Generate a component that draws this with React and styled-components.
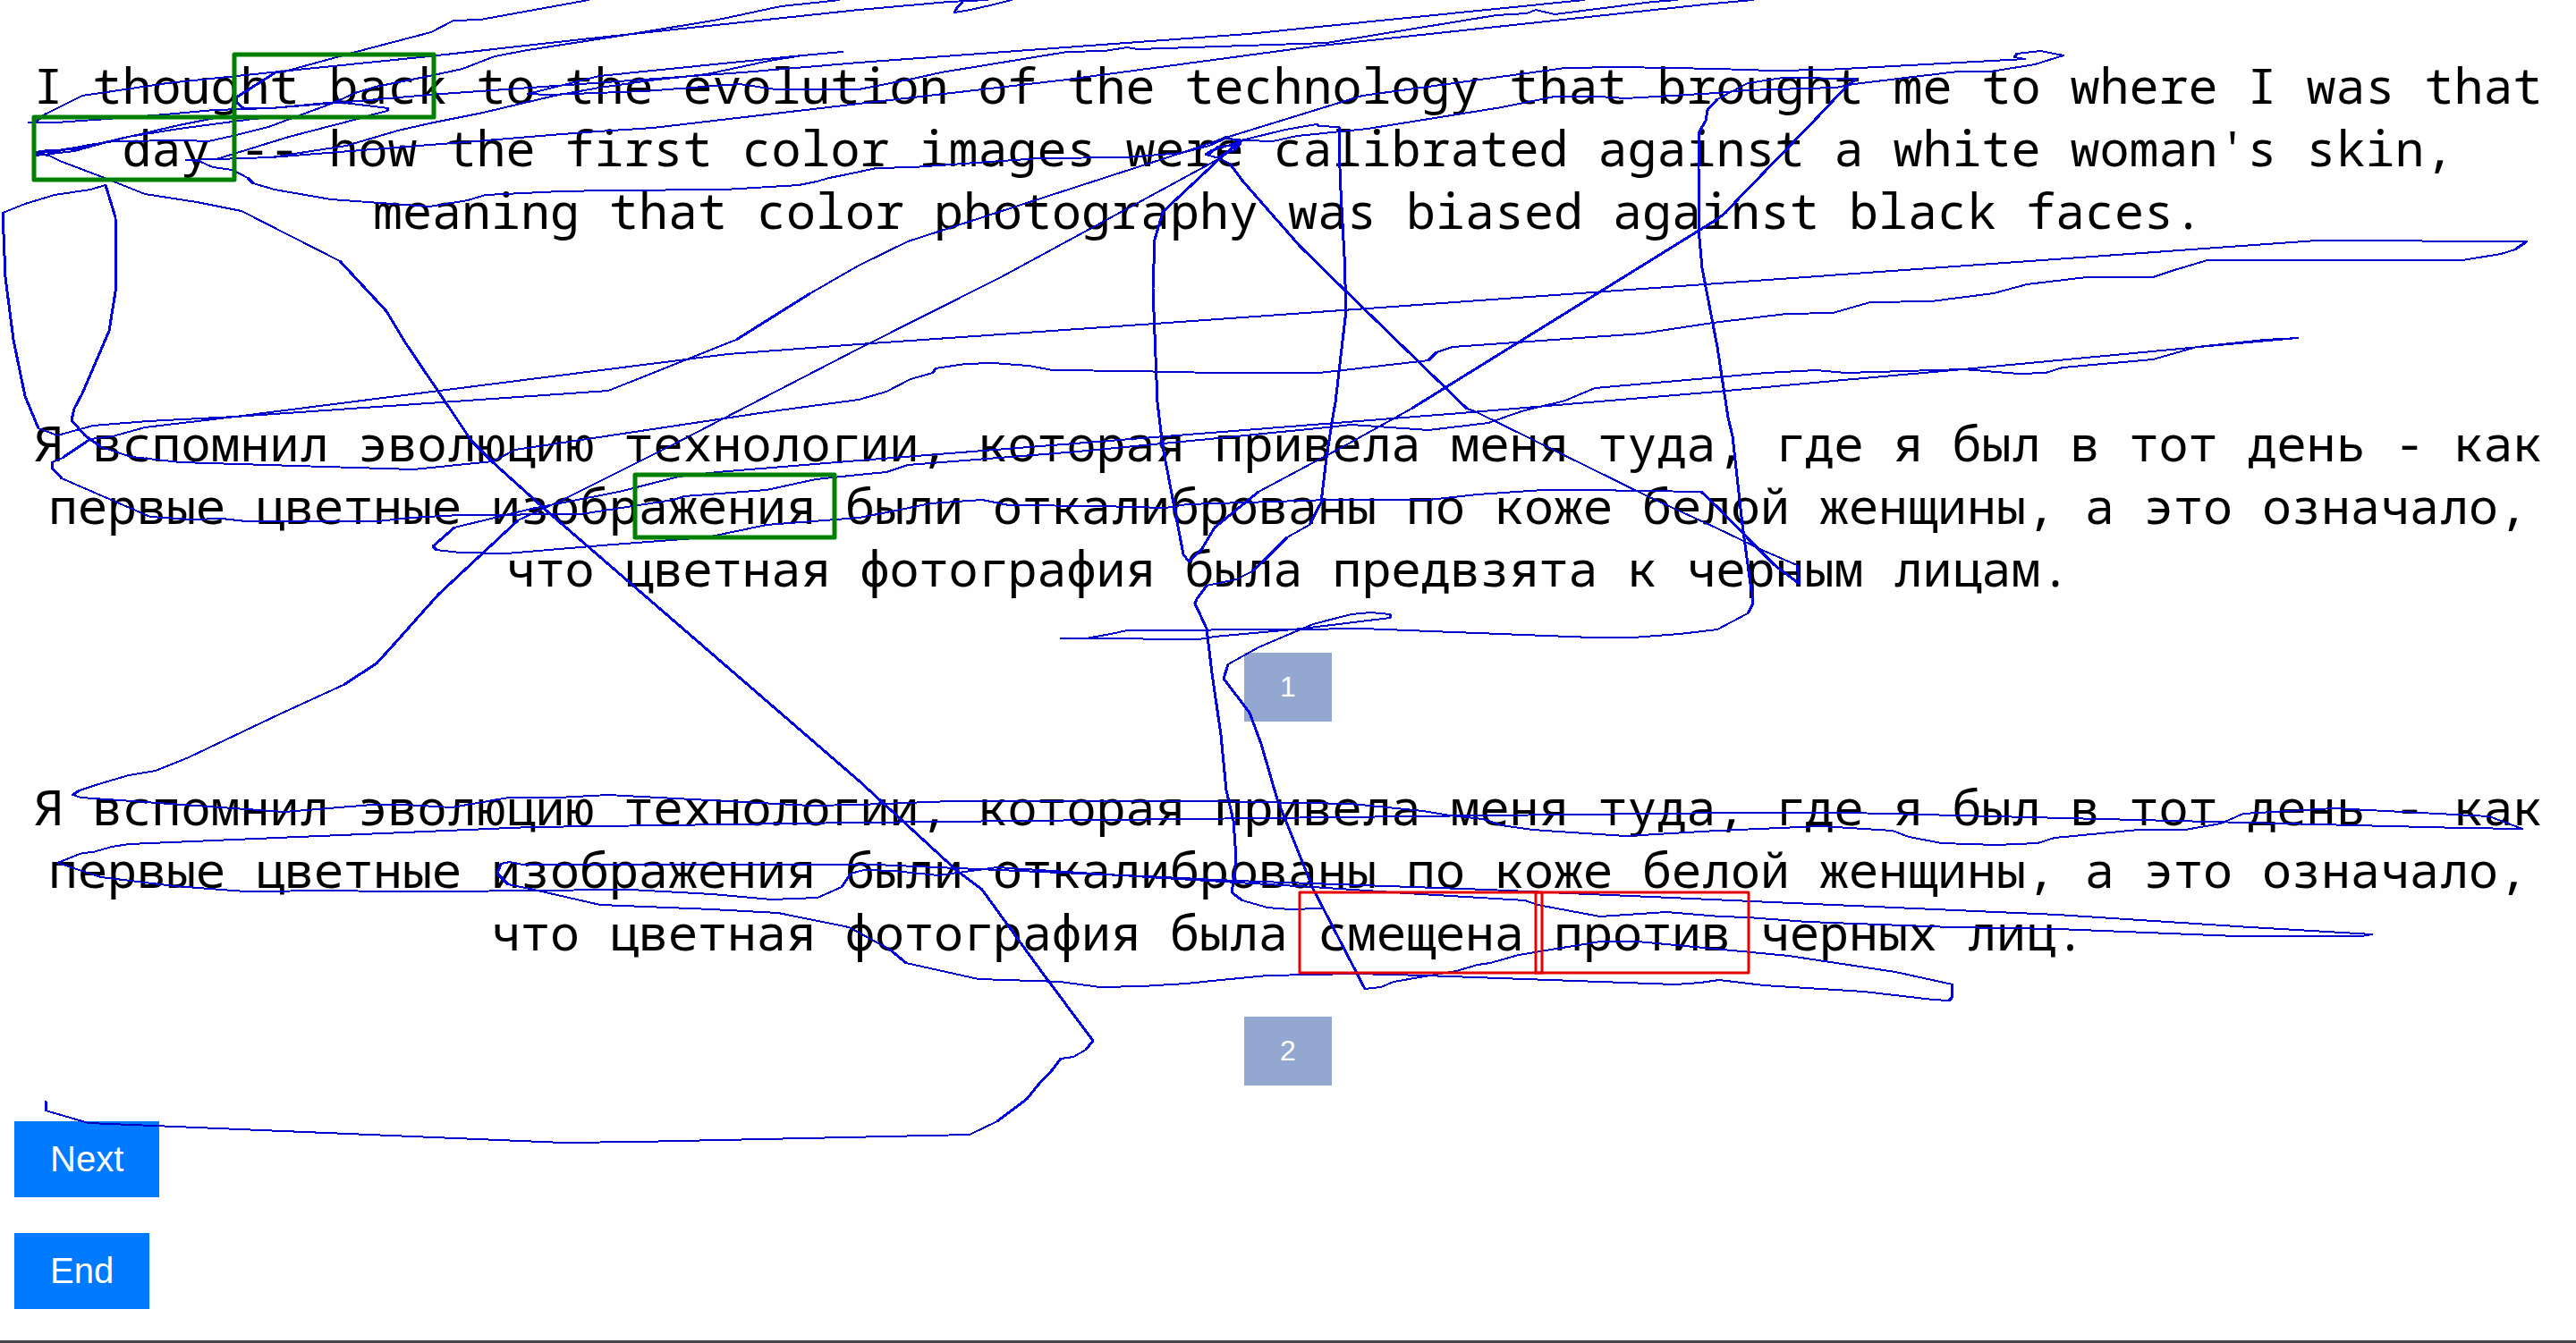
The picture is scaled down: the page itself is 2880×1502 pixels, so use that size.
import React from "react";
import styled, { createGlobalStyle } from "styled-components";

const GlobalStyle = createGlobalStyle`
  body {
    margin: 0;
    background: #fefefe;
    color: #000;
  }
`;

const Page = styled.main`
  position: relative;
  box-sizing: border-box;
  min-height: 100vh;
  padding: 60px 16px 35px;
  border-bottom: 3px solid #45474a;
  display: flex;
  flex-direction: column;
  overflow: hidden;
`;

const Sentence = styled.p`
  margin: 0;
  font-family: "Noto Sans Mono", "DejaVu Sans Mono", "Liberation Mono", monospace;
  font-size: 55px;
  line-height: 70px;
  text-align: center;
`;

const Translations = styled.section`
  display: flex;
  flex-direction: column;
  gap: 60px;
  margin-top: 190px;
`;

const Choice = styled.button`
  align-self: center;
  padding: 20px 40px;
  border: 0;
  background: #93a7d1;
  color: #fff;
  font-family: "Liberation Sans", Arial, sans-serif;
  font-size: 32px;
  line-height: 37px;
`;

const Actions = styled.div`
  display: flex;
  flex-direction: column;
  align-items: flex-start;
  gap: 40px;
  margin-top: 40px;
`;

const Action = styled.button`
  padding: 20px 40px;
  border: 0;
  background: #007bff;
  color: #fff;
  font-family: "Liberation Sans", Arial, sans-serif;
  font-size: 40px;
  line-height: 45px;
`;

const Overlay = styled.svg`
  position: absolute;
  top: 0;
  left: 0;
  pointer-events: none;
  overflow: visible;
`;

const Stroke = styled.line`
  stroke: ${(p) => (p.$steep ? "#0000e6" : "#0000cd")};
  stroke-width: ${(p) => (p.$steep ? 3 : 2)}px;
  stroke-linecap: round;
  shape-rendering: crispEdges;
`;

const Mark = styled.rect`
  fill: none;
  stroke: ${(p) => (p.$wrong ? "#e60000" : "#008000")};
  stroke-width: ${(p) => (p.$wrong ? 3 : 5)}px;
  stroke-linejoin: round;
`;

const source =
  "I thought back to the evolution of the technology that brought me to where I was that day -- how the first color images were calibrated against a white woman's skin, meaning that color photography was biased against black faces.";

const translations = [
  "Я вспомнил эволюцию технологии, которая привела меня туда, где я был в тот день - как первые цветные изображения были откалиброваны по коже белой женщины, а это означало, что цветная фотография была предвзята к черным лицам.",
  "Я вспомнил эволюцию технологии, которая привела меня туда, где я был в тот день - как первые цветные изображения были откалиброваны по коже белой женщины, а это означало, что цветная фотография была смещена против черных лиц.",
];

const traces = [
  // source sentence, upper sweeps
  "658,0 537,22 507,23 482,36 398,58 318,80 308,81 264,109 265,115 272,121 303,121 377,114 434,121 433,124 417,128 400,133 323,153 242,178",
  "208,179 242,178 303,176 387,163 445,146 480,138 540,126 620,107 670,98 727,90 790,83 860,68 897,62 942,58",
  "942,58 897,62 670,85 590,105 613,106 720,102 827,94 867,100 960,100 1021,88 1052,81 1193,58 1235,57 1260,53 1272,55 1483,48 1673,17 1707,15 1717,11 1738,16 1848,2 1875,0",
  "32,137 63,137 120,133 185,128 240,123 303,121 377,115 480,106 607,97 747,87 830,81 960,70 1395,38 1771,0",
  "40,136 52,127 92,107 187,93 313,80 480,63 660,43 960,11 1061,2 1104,0",
  "1131,0 1107,6 1085,11 1067,14 1069,10 1076,2",
  "40,172 53,170 127,158 207,157 233,158 260,152 300,142 373,115 397,104 420,97 480,85 517,77 553,63 590,56 700,39 803,22 873,7 930,1 938,0",
  "40,170 53,168 83,167 143,153 200,144 283,133 320,130",
  "40,174 83,169 127,157 200,140 240,132 260,130",
  "40,171 60,170 100,162 127,158",
  "242,178 303,176 480,162 507,160 653,148 730,143 960,116 1193,89 1468,52 1915,4 1960,0",
  // second and third source lines, then down to the first translation
  "208,179 222,180 238,187 260,190 277,199 283,205 307,212 370,223 480,231 523,224 543,218 627,214 680,213 810,212 860,209 893,207 913,203 927,199 947,195 980,188 1021,187 1162,177 1260,176 1321,171 1352,163 1370,155 1392,157 1423,158 1450,152 1529,144 1679,120 1738,108 1787,108 1817,110 1920,104 1951,101 2052,98 2073,94 2122,88 2189,80 2226,80 2275,72 2307,62 2281,57 2255,60 2252,64 2264,66 2042,78 1981,79 1920,77 1811,75 1750,76 1523,107 1367,155 1321,171 1015,270 960,297 906,328 823,380 680,437 263,466 165,471 104,476 64,487 43,479 28,443 15,380 6,310 3,238 28,228 61,218 101,212 118,207 129,243 130,320 122,370 92,440 83,457 80,470 95,487 113,500 147,511 202,517 331,521 462,525 551,516 576,503 863,460 960,447 991,438 1018,424 1043,417 1046,412 1079,407 1110,406 1150,409 1177,414 1266,415 1358,417 1474,417 1493,415 1597,403 1606,394 1624,388 1836,373 1915,361 1997,351 2049,350 2091,338 2159,337 2229,328 2266,318 2333,310 2407,310 2431,302 2468,291 2753,291 2796,284 2812,279 2825,270 2590,269 1920,317 1291,362 960,385 814,396 735,406 263,466 162,478 126,488 101,491 70,512 58,517 58,523 69,535 168,578 214,581 248,580 275,583 422,583 459,579 514,576 649,575 753,559 765,555 857,548 912,536 960,531 991,528 1015,520 1205,505 1352,491 1493,477 1511,475 1597,481 1664,473 1701,460 1750,448 1783,434 1920,422 1975,417 2030,414 2064,417 2195,413 2257,418 2287,417 2306,411 2407,402 2456,388 2532,380 2569,378 2459,388 2195,413 2061,425 1920,438 1633,462 960,515 802,528 759,533 692,550 594,569 508,590 484,611 488,615 514,618 566,619 673,610 790,601 857,587 960,579 997,572 1040,563 1098,559 1128,565 1229,566 1303,568 1327,564 1487,559 1597,559 1652,553 1725,548 1774,548 1902,550 1920,567 1957,605 1984,632 2012,653 2009,632 1972,616 1920,591 1842,555 1649,460 1640,457 1502,323 1453,275 1389,202 1375,183 1363,177 1348,173 1355,168 1370,164 1385,158 1370,153 1352,163",
  // small scribble around one word
  "1352,172 1362,164 1384,162 1387,157 1392,156",
  "1364,177 1378,165 1388,158",
  "1363,175 1380,168 1387,160",
  // loops between the first translation and its rating
  "1385,160 1364,177 1300,237 1291,268 1289,323 1294,450 1300,500 1323,620 1329,628 1343,615 1358,590 1407,550 1499,501 1578,457 1920,245 1929,238 1941,225 2033,130 2064,97 2076,88 1993,87 1954,93 1920,111 1909,123 1907,135 1900,147 1899,187 1900,267 1903,300 1920,388 1932,467 1937,488 1948,587 1960,675 1954,686 1920,704 1878,709 1826,713 1780,713 1523,703 1450,704 1260,705 1242,709 1214,714 1340,715 1358,712 1456,703 1554,691 1554,687 1532,685 1511,687 1468,698 1407,724 1373,743 1368,759 1397,797 1410,832 1428,894 1468,994 1481,1019 1526,1106 1544,1104 1558,1098 1628,1086 1652,1079 1666,1077 1698,1068 1789,1053 1831,1053 2000,1069 2119,1087 2183,1101 2182,1116 2179,1119 2161,1118 2084,1109 1972,1102 1922,1096 1901,1099 1873,1101 1593,1091 1516,1089 1417,1091 1365,1096 1326,1100 1277,1103 1230,1104 1185,1098 1094,1095 1013,1077 995,1062 949,1037 870,1021 796,1017 671,1012 597,995 568,989 556,977 560,966 570,964 584,967 978,967 1300,981 1382,985 1663,995 2300,1023 2516,1037 2652,1045",
  "1186,714 1214,714",
  "1392,156 1437,145 1472,139 1475,141 1497,142 1497,163 1499,213 1503,287 1505,347 1493,450 1490,467 1483,512 1477,562 1464,587 1439,601 1413,627 1400,639 1382,648 1349,655 1338,670 1336,675 1349,703 1355,753 1365,822 1371,884 1379,918 1382,959 1379,986 1377,998 1389,1007 1417,1015 1442,1017 1477,1016",
  // down to the second translation
  "1385,160 1364,177 1119,310 960,390 747,500 631,558 579,582 490,665 441,720 421,742 384,766 312,799 211,847 174,862 144,867 110,877 89,884 81,889 91,892 318,908 416,900 453,900 505,903 569,892 624,892 680,889 906,901 960,900 1064,896 1352,896 1511,899 1591,907 1621,912 1658,916 1679,923 1713,928 1817,935 1920,929 2036,924 2116,929 2134,936 2171,943 2232,945 2278,943 2297,937 2391,928 2443,928 2483,921 2508,910 2609,904 2783,913 2820,927 2753,926 2067,909 1938,909 1664,912 1327,916 960,920 594,925 144,944 125,947 104,953 92,954 64,965 113,981 195,991 274,997 377,996 423,997 514,997 580,996 705,995 796,1000 862,1006 914,1004 941,992 951,977 966,973 999,974 1049,979 1115,970 1300,982 1467,992 1572,999 1705,1007 1719,1012 1789,1025 1863,1020 1923,1025 1954,1026 2021,1031 2182,1037 2300,1039 2500,1047 2640,1047 2652,1045",
  // long way down to the buttons
  "40,172 55,174 67,180 117,199 162,217 220,226 270,236 380,292 432,348 453,383 505,460 527,493 551,517 612,572 960,873 1069,973 1098,995 1161,1082 1222,1164 1214,1174 1200,1182 1186,1184 1177,1196 1161,1213 1148,1229 1115,1254 1084,1269 713,1277 630,1278 99,1256 51,1242 51,1232",
];

const toSegments = (points) => {
  const nodes = points.split(" ").map((pair) => pair.split(",").map(Number));
  return nodes.slice(1).map(([x2, y2], i) => {
    const [x1, y1] = nodes[i];
    return { x1, y1, x2, y2, steep: Math.abs(y2 - y1) > 0.58 * Math.abs(x2 - x1) };
  });
};

const segments = traces.flatMap(toSegments);

const marks = [
  { x: 262, y: 61, width: 223, height: 70 },
  { x: 38, y: 131, width: 224, height: 70 },
  { x: 710, y: 531, width: 223, height: 70 },
  { x: 1453, y: 998, width: 271, height: 90, wrong: true },
  { x: 1717, y: 998, width: 238, height: 90, wrong: true },
];

export default function App() {
  return (
    <>
      <GlobalStyle />
      <Page>
        <Sentence lang="en">{source}</Sentence>
        <Translations>
          {translations.map((text, i) => (
            <React.Fragment key={i}>
              <Sentence lang="ru">{text}</Sentence>
              <Choice type="button">{i + 1}</Choice>
            </React.Fragment>
          ))}
        </Translations>
        <Actions>
          <Action type="button">Next</Action>
          <Action type="button">End</Action>
        </Actions>
        <Overlay width="2880" height="1499" aria-hidden="true">
          {segments.map(({ steep, ...ends }, i) => (
            <Stroke key={i} $steep={steep} {...ends} />
          ))}
          {marks.map(({ wrong, ...box }, i) => (
            <Mark key={i} $wrong={wrong} {...box} />
          ))}
        </Overlay>
      </Page>
    </>
  );
}
